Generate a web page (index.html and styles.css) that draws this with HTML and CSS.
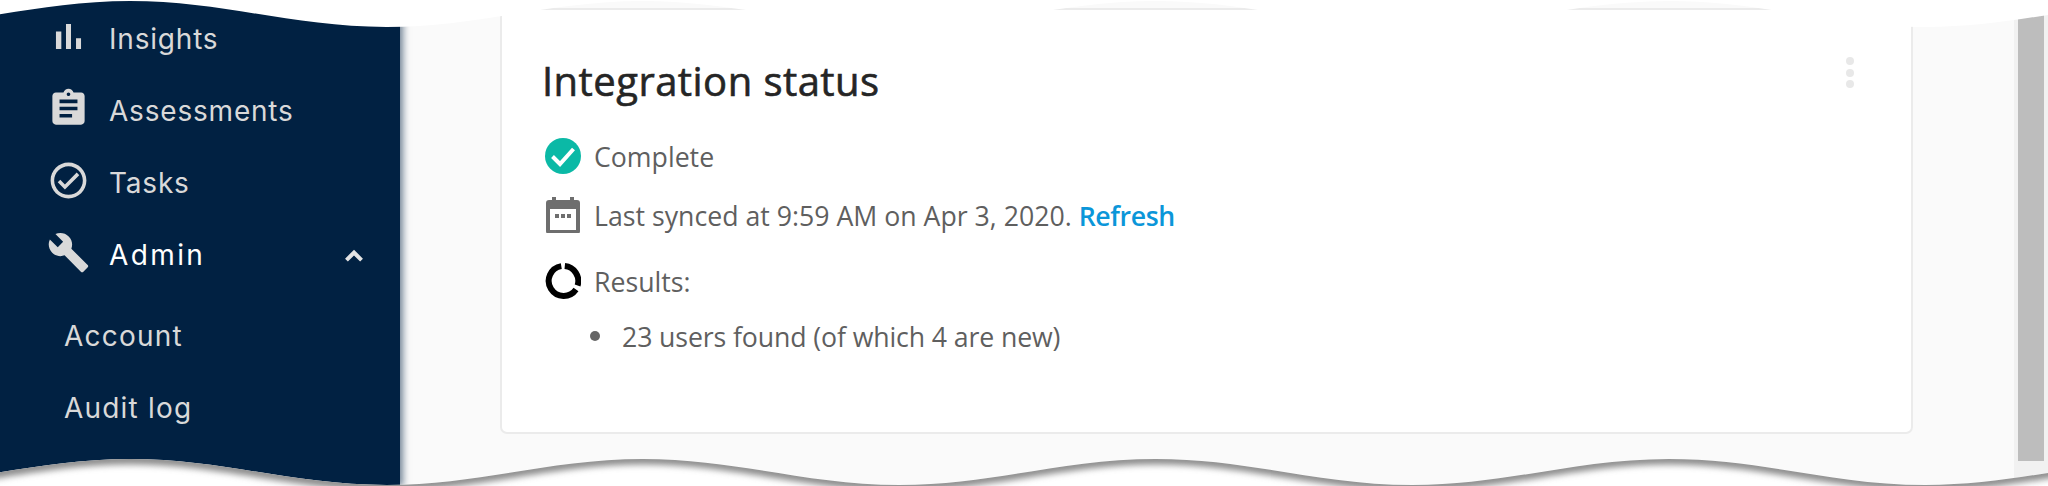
FILE: index.html
```html
<!DOCTYPE html>
<html lang="en">
<head>
    <meta charset="UTF-8">
    <title>Integration status</title>
    <link rel="stylesheet" href="styles.css">
</head>
<body>
<div class="page">
    <aside class="sidebar">
        <a class="nav-item">
            <svg class="nav-icon" viewBox="0 0 24 24"><path d="M5 9.2h3V19H5zM10.6 5h2.8v14h-2.8zm5.6 8H19v6h-2.8z"/></svg>
            <span>Insights</span>
        </a>
        <a class="nav-item">
            <svg class="nav-icon" viewBox="0 0 24 24"><path d="M19 3h-4.18C14.4 1.84 13.3 1 12 1c-1.3 0-2.4.84-2.82 2H5c-1.1 0-2 .9-2 2v14c0 1.1.9 2 2 2h14c1.1 0 2-.9 2-2V5c0-1.1-.9-2-2-2zm-7 0c.55 0 1 .45 1 1s-.45 1-1 1-1-.45-1-1 .45-1 1-1zm2 14H7v-2h7v2zm3-4H7v-2h10v2zm0-4H7V7h10v2z"/></svg>
            <span>Assessments</span>
        </a>
        <a class="nav-item">
            <svg class="nav-icon" viewBox="0 0 24 24"><path d="M12 2C6.48 2 2 6.48 2 12s4.48 10 10 10 10-4.48 10-10S17.52 2 12 2zm0 18c-4.41 0-8-3.59-8-8s3.59-8 8-8 8 3.59 8 8-3.59 8-8 8zm4.59-12.42L10 14.17l-2.59-2.58L6 13l4 4 8-8z"/></svg>
            <span>Tasks</span>
        </a>
        <a class="nav-item active">
            <svg class="nav-icon" viewBox="0 0 24 24"><path d="M22.7 19l-9.1-9.1c.9-2.3.4-5-1.5-6.9-2-2-5-2.4-7.4-1.3L9 6 6 9 1.6 4.7C.4 7.1.9 10.1 2.9 12.1c1.9 1.9 4.6 2.4 6.9 1.5l9.1 9.1c.4.4 1 .4 1.4 0l2.3-2.3c.5-.4.5-1.1.1-1.4z"/></svg>
            <span class="nav-label">Admin</span>
            <svg class="nav-chevron" viewBox="0 0 24 24"><path d="M12 8l-6 6 1.41 1.41L12 10.83l4.59 4.58L18 14z"/></svg>
        </a>
        <div class="sub-nav">
            <a class="sub-item">Account</a>
            <a class="sub-item">Audit log</a>
        </div>
    </aside>

    <main class="content">
        <section class="card">
            <div class="card-head">
                <h2 class="card-title">Integration status</h2>
                <div class="kebab"><i></i><i></i><i></i></div>
            </div>
            <div class="status-row row-complete">
                <svg class="status-icon" viewBox="0 0 36 36">
                    <circle cx="18" cy="18" r="18" fill="#0bb9a6"/>
                    <path d="M7.5 18.5l7.5 7.5 13.5-15" fill="none" stroke="#fff" stroke-width="4"/>
                </svg>
                <span>Complete</span>
            </div>
            <div class="status-row row-synced">
                <svg class="status-icon" viewBox="0 0 36 36">
                    <path fill="#6e6e6e" d="M7 0h4v3h14V0h4v3h3c2 0 3 1 3 3v28c0 2-1 3-3 3H4c-2 0-3-1-3-3V6c0-2 1-3 3-3h3zM5 12v21h26V12z"/>
                    <path fill="#6e6e6e" d="M10 17h4v4h-4zM16 17h4v4h-4zM22 17h4v4h-4z"/>
                </svg>
                <span>Last synced at 9:59 AM on Apr 3, 2020. <a class="refresh">Refresh</a></span>
            </div>
            <div class="status-row row-results">
                <svg class="status-icon" viewBox="0 0 36 36">
                    <path d="M16.3 3.1A15 15 0 1 0 31 26.5" fill="none" stroke="#000" stroke-width="6"/>
                    <path d="M19.8 3.1A15 15 0 0 1 32.6 22.5" fill="none" stroke="#000" stroke-width="6"/>
                </svg>
                <span>Results:</span>
            </div>
            <ul class="result-list">
                <li>23 users found (of which 4 are new)</li>
            </ul>
        </section>
    </main>

    <div class="scrollbar"><div class="scroll-thumb"></div></div>

    <!-- torn paper edges on top of the screenshot -->
    <svg class="torn" viewBox="0 0 2048 486">
        <defs>
            <clipPath id="below-edge">
                <path d="M-126.5 485C-33 485 36.6 459 130 459S293 485 386.5 485S549.6 459 643 459S806.1 485 899.5 485S1062.6 459 1156 459S1319 485 1412.5 485S1575.6 459 1669 459S1832 485 1925.5 485S2088.6 459 2182 459V500H-126.5z"/>
            </clipPath>
            <filter id="soft" x="-5%" y="-50%" width="110%" height="200%">
                <feGaussianBlur stdDeviation="3"/>
            </filter>
        </defs>
        <path fill="#fff" d="M-126.5 27C-33 27 36.6 1 130 1S293 27 386.5 27S549.6 1 643 1S806.1 27 899.5 27S1062.6 1 1156 1S1319 27 1412.5 27S1575.6 1 1669 1S1832 27 1925.5 27S2088.6 1 2182 1V-10H-126.5z"/>
        <path fill="#fff" d="M-126.5 485C-33 485 36.6 459 130 459S293 485 386.5 485S549.6 459 643 459S806.1 485 899.5 485S1062.6 459 1156 459S1319 485 1412.5 485S1575.6 459 1669 459S1832 485 1925.5 485S2088.6 459 2182 459V500H-126.5z"/>
        <g clip-path="url(#below-edge)">
            <path filter="url(#soft)" fill="none" stroke="#8c8c8c" stroke-width="11" d="M-126.5 485C-33 485 36.6 459 130 459S293 485 386.5 485S549.6 459 643 459S806.1 485 899.5 485S1062.6 459 1156 459S1319 485 1412.5 485S1575.6 459 1669 459S1832 485 1925.5 485S2088.6 459 2182 459"/>
        </g>
    </svg>
</div>
</body>
</html>
```

FILE: styles.css
```css
*{
    margin: 0;
    padding: 0;
    box-sizing: border-box;
}
html, body{
    height: 100%;
    overflow: hidden;
    background: #ffffff;
}
.page{
    display: flex;
    width: 2048px;
    height: 486px;
    position: relative;
    overflow: hidden;
    font-family: "Open Sans", "Noto Sans", sans-serif;
}

/* sidebar */
.sidebar{
    width: 400px;
    flex: none;
    background: #012142;
    color: #d9d9d9;
    font-family: Inter, "Liberation Sans", sans-serif;
    font-size: 28px;
    letter-spacing: .8px;
    box-shadow: 3px 0 7px rgba(1, 33, 66, .55);
    position: relative;
    z-index: 1;
}
.nav-item{
    display: flex;
    align-items: center;
    height: 72px;
    padding: 0 30px 0 47px;
    line-height: 72px;
}
.nav-item span{
    margin-left: 19px;
    padding-top: 6px;
}
.nav-icon{
    width: 43px;
    height: 43px;
    flex: none;
    fill: #d9d9d9;
}
.nav-item.active{
    color: #ffffff;
    letter-spacing: 2.4px;
}
.nav-item .nav-label{
    flex: 1;
}
.nav-chevron{
    width: 32px;
    height: 32px;
    flex: none;
    margin-top: 8px;
    fill: #e4e4e4;
    stroke: #e4e4e4;
    stroke-width: 1;
}
.sub-nav{
    margin-top: 6px;
    letter-spacing: 1.2px;
}
.sub-item{
    display: block;
    height: 72px;
    line-height: 72px;
    padding: 6px 0 0 64px;
}

/* main column */
.content{
    flex: 1;
    background: #fafafa;
    padding: 8px 101px 0 100px;
}
.card{
    height: 426px;
    background: #ffffff;
    border: 2px solid #ebebeb;
    border-radius: 7px;
    padding: 0 57px 0 42px;
    color: #5f5f5f;
    font-size: 26.7px;
}
.card-head{
    display: flex;
    justify-content: space-between;
    align-items: flex-start;
    height: 119px;
}
.card-title{
    font-size: 40px;
    font-weight: 400;
    -webkit-text-stroke: .6px #252525;
    letter-spacing: .45px;
    line-height: 54px;
    margin: 44px 0 0 -2px;
    color: #252525;
}
.kebab{
    display: flex;
    flex-direction: column;
    gap: 3.5px;
    margin-top: 47px;
}
.kebab i{
    display: block;
    width: 8px;
    height: 8px;
    border-radius: 50%;
    background: #e8e8e8;
}
.status-row{
    display: flex;
    align-items: center;
    height: 36px;
}
.status-icon{
    width: 36px;
    height: 36px;
    flex: none;
    margin: 0 13px 0 1px;
}
.row-complete{
    margin-top: 9px;
}
.row-synced{
    margin-top: 23px;
}
.row-results{
    margin-top: 30px;
}
.refresh{
    color: #0b96d9;
    font-weight: 600;
    letter-spacing: -.4px;
}
.result-list{
    list-style: none;
    margin: 20px 0 0 78px;
    letter-spacing: -.12px;
}
.result-list li{
    position: relative;
    line-height: 36px;
}
.result-list li::before{
    content: "";
    position: absolute;
    left: -32px;
    top: 12px;
    width: 10px;
    height: 10px;
    border-radius: 50%;
    background: #666666;
}

/* browser scrollbar */
.scrollbar{
    width: 34px;
    flex: none;
    background: #f1f1f1;
    padding: 0 4px;
}
.scroll-thumb{
    height: 461px;
    background: #bdbdbd;
}

.torn{
    position: absolute;
    left: 0;
    top: 0;
    width: 2048px;
    height: 486px;
    z-index: 2;
}
```
